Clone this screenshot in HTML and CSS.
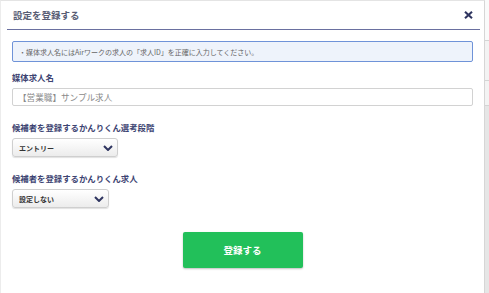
FILE: index.html
```html
<!DOCTYPE html>
<html lang="ja">
<head>
    <meta charset="UTF-8">
    <meta name="viewport" content="width=device-width, initial-scale=1.0">
    <title>設定を登録する</title>
    <link rel="stylesheet" href="styles.css">
</head>
<body>
    <div class="modal">
        <div class="modal-header">
            <h2>設定を登録する</h2>
            <span class="close">
                <svg width="9" height="8" viewBox="0 0 9 8"><path d="M1 0.8 L8 7.2 M8 0.8 L1 7.2" stroke="#2f3560" stroke-width="2.1"/></svg>
            </span>
        </div>
        <div class="modal-body">
            <div class="notice">・媒体求人名にはAirワークの求人の「求人ID」を正確に入力してください。</div>

            <label class="field-label label-first">媒体求人名</label>
            <div class="text-input">【営業職】サンプル求人</div>

            <label class="field-label">候補者を登録するかんりくん選考段階</label>
            <div class="select select-wide">
                <span>エントリー</span>
                <svg width="10" height="6" viewBox="0 0 10 6"><path d="M1 1 L5 5 L9 1" fill="none" stroke="#2f3560" stroke-width="2"/></svg>
            </div>

            <label class="field-label">候補者を登録するかんりくん求人</label>
            <div class="select select-narrow">
                <span>設定しない</span>
                <svg width="10" height="6" viewBox="0 0 10 6"><path d="M1 1 L5 5 L9 1" fill="none" stroke="#2f3560" stroke-width="2"/></svg>
            </div>

            <div class="actions">
                <button class="submit">登録する</button>
            </div>
        </div>
    </div>
    <div class="backdrop">
        <div class="row row-top"></div>
        <div class="row row-mid"></div>
        <div class="row row-small"></div>
        <div class="row row-rest"></div>
    </div>
</body>
</html>
```

FILE: styles.css
```css
body {
    margin: 0;
    display: flex;
    height: 293px;
    overflow: hidden;
    font-family: "Noto Sans CJK JP", "Noto Sans", sans-serif;
    background-color: #f3f3f3;
}
.modal {
    width: 485px;
    flex-shrink: 0;
    background-color: white;
    border-top: 1px solid #e4e4e4;
    border-left: 1px solid #ececec;
    border-right: 1px solid #d6d6d6;
    box-sizing: border-box;
}
.modal-header {
    display: flex;
    align-items: center;
    justify-content: space-between;
    height: 28px;
    margin: 0 4px 0 6px;
    padding: 0 7px 0 6px;
    border-bottom: 1px solid #6a70a0;
}
.modal-header h2 {
    margin: 0;
    font-size: 9.5px;
    font-weight: bold;
    color: #585d74;
}
.close {
    display: flex;
}
.modal-body {
    padding: 11px 11px 0 11px;
}
.notice {
    height: 21px;
    box-sizing: border-box;
    padding: 0 6px;
    display: flex;
    align-items: center;
    background-color: #eef3fb;
    border: 1px solid #6f93d8;
    border-radius: 2px;
    font-size: 7px;
    color: #666;
}
.field-label {
    display: block;
    margin: 15px 0 5px 0;
    font-size: 8.4px;
    line-height: 12px;
    font-weight: bold;
    color: #3d4472;
}
.label-first {
    margin-top: 9px;
}
.text-input {
    height: 18px;
    box-sizing: border-box;
    padding: 0 0 0 5px;
    display: flex;
    align-items: center;
    border: 1px solid #d2d2d2;
    border-radius: 2px;
    font-size: 8.6px;
    color: #8a8a8a;
}
.select {
    height: 19px;
    box-sizing: border-box;
    padding: 0 4px 0 6px;
    display: flex;
    align-items: center;
    justify-content: space-between;
    background: linear-gradient(#ffffff, #ececec);
    border: 1px solid #cfcfcf;
    border-radius: 3px;
    box-shadow: 0 1px 1px rgba(0, 0, 0, 0.12);
    font-size: 7px;
    font-weight: bold;
    color: #333;
}
.select-wide {
    width: 106px;
}
.select-narrow {
    width: 97px;
}
.actions {
    display: flex;
    justify-content: center;
    margin-top: 24px;
}
.submit {
    width: 120px;
    height: 36px;
    border: none;
    border-radius: 2px;
    background-color: #22c05a;
    box-shadow: 0 1px 2px rgba(0, 0, 0, 0.25);
    color: white;
    font-family: inherit;
    font-size: 9.5px;
    font-weight: bold;
    cursor: pointer;
}
.backdrop {
    flex: 1;
    display: flex;
    flex-direction: column;
}
.row {
    border-bottom: 1px solid #d4d4d4;
}
.row-top {
    height: 40px;
    background-color: #fafafa;
}
.row-mid {
    height: 39px;
    background-color: #f3f3f3;
}
.row-small {
    height: 24px;
    background-color: #f3f3f3;
}
.row-rest {
    flex: 1;
    border-bottom: none;
    background-color: #e6e6e6;
}
```
